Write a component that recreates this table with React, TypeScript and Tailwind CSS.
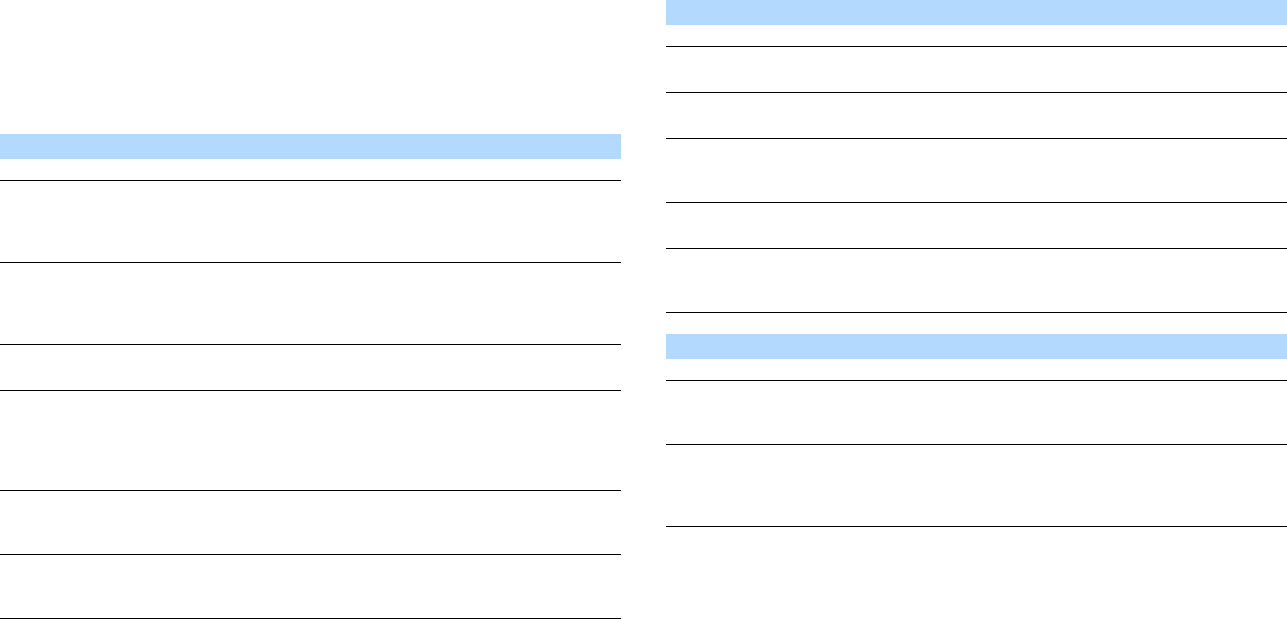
type Table = { rows: number[] };

const leftTables: Table[] = [{ rows: [82, 82, 46, 100, 64, 64] }];
const rightTables: Table[] = [
  { rows: [46, 46, 64, 46, 64] },
  { rows: [64, 82] },
];

function BlankTable({ rows }: Table) {
  return (
    <div className="w-full">
      <div className="h-[25px] bg-[#b3d9ff]" />
      <div className="h-[22px] border-b border-black" />
      {rows.map((h, i) => (
        <div
          key={i}
          className="border-b border-black"
          style={{ height: h }}
        />
      ))}
    </div>
  );
}

export default function App() {
  return (
    <div className="flex w-[1287px] gap-[45px] bg-white font-['Liberation_Sans',sans-serif]">
      <section className="w-[621px] pt-[134px]">
        {leftTables.map((t, i) => (
          <BlankTable key={i} rows={t.rows} />
        ))}
      </section>
      <section className="flex flex-1 flex-col gap-[21px]">
        {rightTables.map((t, i) => (
          <BlankTable key={i} rows={t.rows} />
        ))}
      </section>
    </div>
  );
}
